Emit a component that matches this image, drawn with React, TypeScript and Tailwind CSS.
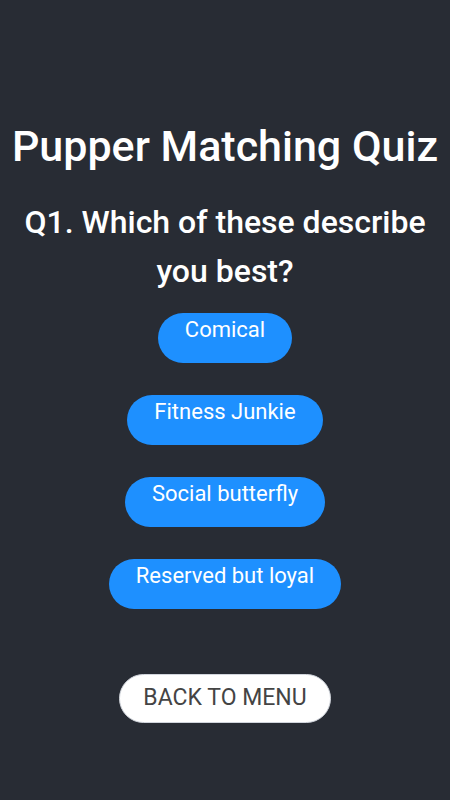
import React from "react";

const answers = ["Comical", "Fitness Junkie", "Social butterfly", "Reserved but loyal"];

const App = () => {
  return (
    <div
      className="w-full min-h-[800px] bg-[#282c34] text-white flex flex-col items-center pt-[118px]"
      style={{ fontFamily: "Roboto, sans-serif" }}
    >
      <h1 className="text-[43px] leading-[56px] font-medium text-center">Pupper Matching Quiz</h1>
      <h2 className="mt-[24px] text-[32px] leading-[49px] font-medium text-center px-4">
        Q1. Which of these describe you best?
      </h2>
      <div className="mt-[17px] flex flex-col items-center gap-[32px]">
        {answers.map((a) => (
          <button
            key={a}
            className="h-[50px] px-[27px] pt-[2px] rounded-full bg-[#1e90ff] text-white text-[22px] leading-[30px] flex items-start"
          >
            {a}
          </button>
        ))}
      </div>
      <button className="mt-[65px] h-[49px] w-[212px] rounded-full bg-white text-[#444] text-[23px] border border-gray-300">
        BACK TO MENU
      </button>
    </div>
  );
};

export default App;
